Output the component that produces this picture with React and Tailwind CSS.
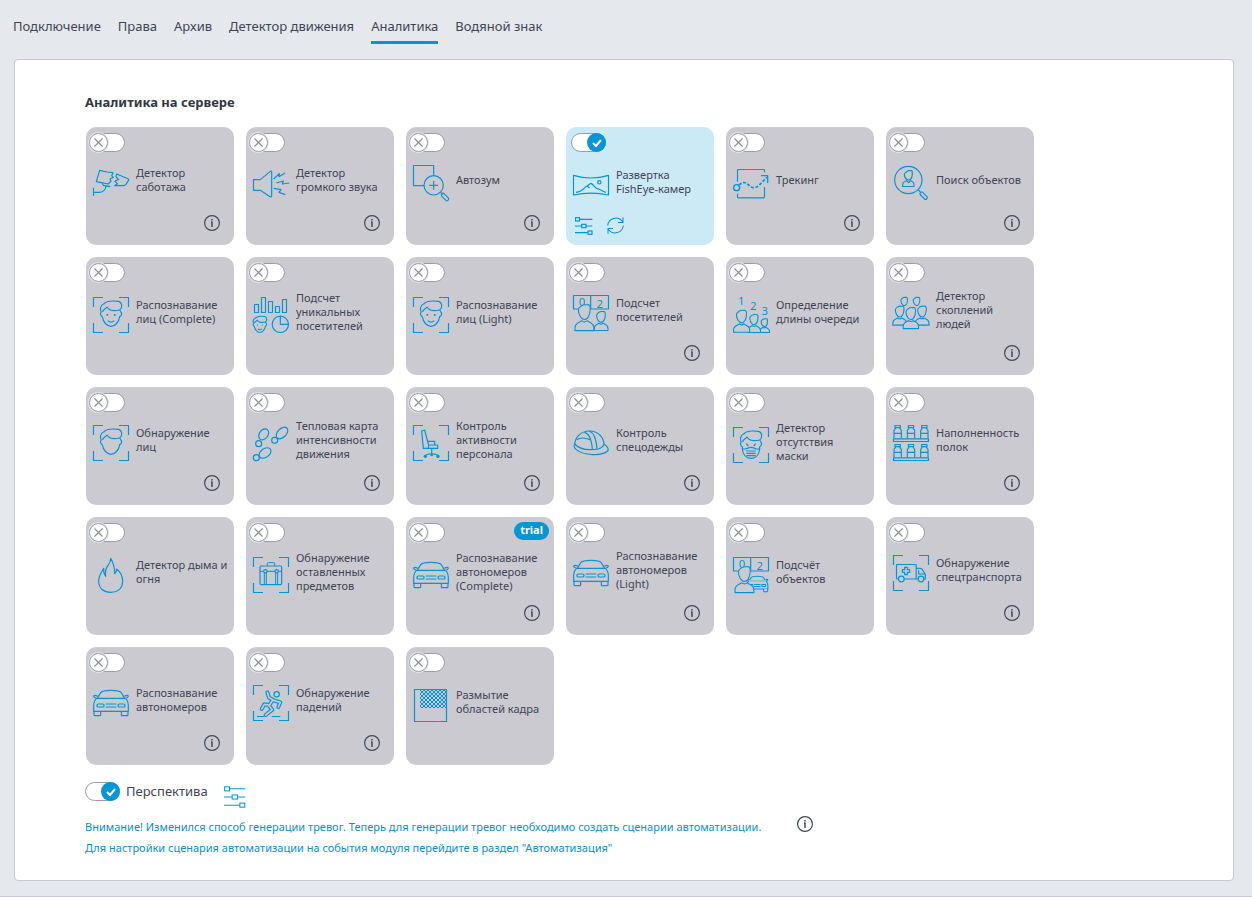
import React, { useState } from 'react';
import clsx from 'clsx';

const tabs = ['Подключение', 'Права', 'Архив', 'Детектор движения', 'Аналитика', 'Водяной знак'];

// All module icons share a 108x108 grid, shown at 36px
const Icon = ({ children }) => (
  <svg
    viewBox="0 0 108 108"
    className="h-9 w-9 shrink-0 overflow-visible"
    fill="none"
    stroke="#0095d6"
    strokeWidth="3.5"
    strokeLinejoin="round"
    aria-hidden="true"
  >
    {children}
  </svg>
);

const Brackets = () => (
  <path d="M30 1.5H1.5V30M78 1.5h28.5V30M1.5 78v28.5H30M106.5 78v28.5H78" />
);

const Hair = () => (
  <path d="M25 46C20 38 22 24 32 21C40 12 60 11 76 13C87 15 90 30 80 39C66 42 54 42 47 36L42 30C38 37 29 36 29 45M80 39C83 40 83 43 83 46" />
);

const FaceOutline = () => (
  <path d="M25 46C20 47 23 57 28 59C30 75 42 88 54 88C66 88 78 75 80 59C86 57 88 47 83 46" />
);

const Face = () => (
  <>
    <Hair />
    <FaceOutline />
    <path d="M43 51v5M65 51v5" strokeWidth="5" />
    <path d="M44 71Q54 80 64 71" />
  </>
);

const Head = ({ x, y, s }) => (
  <path
    d="M12 17C13 9 18 9 22 5C28 0 36 3 40 2C46 2 48 8 47 16C47 32 40 46 30 46C20 46 12 30 12 17Z"
    transform={`translate(${x} ${y}) scale(${s})`}
    strokeWidth={3.3 / s}
    fill="#cbcad1"
  />
);

const Person = ({ x, y, s }) => (
  <g>
    <path
      d="M2 79V70C2 56 14 55 22 50Q30 56 38 50C46 55 58 56 58 70V79Z"
      transform={`translate(${x} ${y}) scale(${s})`}
      strokeWidth={3.3 / s}
      fill="#cbcad1"
    />
    <Head x={x} y={y} s={s} />
  </g>
);

const Digit = ({ x, y, children }) => (
  <text x={x} y={y} fontSize="34" textAnchor="middle" fill="#0095d6" stroke="none" fontFamily="Noto Sans, sans-serif">
    {children}
  </text>
);

const Handle = ({ x, y }) => (
  <rect x="-13" y="-5" width="26" height="10" rx="4" transform={`translate(${x} ${y}) rotate(45)`} />
);

const CarShape = () => (
  <>
    <path d="M13 40L23 23Q27 16 54 16Q81 16 85 23L95 40" />
    <path d="M14 34C8 30 2 30 2 34C3 38 8 39 11 40H97C100 39 105 38 106 34C106 30 100 30 94 34" />
    <path d="M11 40C4 46 2 54 2 62V79H106V62C106 54 104 46 97 40" />
    <rect x="12" y="57" width="21" height="9" rx="4" />
    <rect x="75" y="57" width="21" height="9" rx="4" />
    <path d="M38 57H70M38 66H70" />
    <path d="M3 79V89Q3 92 6 92H20Q23 92 23 89V79M85 79V89Q85 92 88 92H102Q105 92 105 89V79" />
  </>
);

const Bottle = ({ x, y }) => (
  <g transform={`translate(${x} ${y})`}>
    <path d="M4 1.5H20V8H4ZM6 8C6 13 1 12 1 18V40M18 8C18 13 23 12 23 18V40M1 25H23" />
  </g>
);

const Board = () => <path d="M1.5 42V1.5H106.5V42ZM53 2V42" />;

const icons = {
  sabotage: (
    <Icon>
      <path d="M20 16L42 21L60 23L56 32L61 37L51 42L54 48L46 57L10 50Z" />
      <path d="M71 27L105 41Q109 43 106 47L99 58Q95 62 88 62L65 62L73 56L66 49L77 43L69 36Z" />
      <path d="M27 54L31 61L52 65M39 63C37 76 30 82 18 82H2M1.5 68V93" />
    </Icon>
  ),
  sound: (
    <Icon>
      <path d="M1.5 44V76H22L51 95Q56 97 56 92V21Q56 16 51 20L22 44Z" />
      <path d="M62 42L79 26L78 35L96 24M70 54L91 48L88 57L109 54M62 70L84 74L78 82L97 89" />
    </Icon>
  ),
  autozoom: (
    <Icon>
      <path d="M33 62H1.5V1.5H62V31" />
      <circle cx="62" cy="61" r="29" />
      <path d="M62 48V74M49 61H75M83 82L89 88" />
      <Handle x={96} y={96} />
    </Icon>
  ),
  fisheye: (
    <Icon>
      <path d="M1.5 25Q54 41 106.5 25V84Q54 73 1.5 84Z" />
      <path d="M9 76C22 75 30 68 36 62L42 57L50 63M42 57L54 49C62 52 66 64 73 65C82 67 90 74 99 76" />
      <circle cx="79" cy="46" r="5" />
    </Icon>
  ),
  tracking: (
    <Icon>
      <path d="M13.5 50V16Q13.5 13.5 16 13.5H92Q94.5 13.5 94.5 16V22M13.5 86V96Q13.5 98.5 16 98.5H92Q94.5 98.5 94.5 96V66" />
      <circle cx="11" cy="68" r="9" strokeWidth="4" />
      <path d="M18 60C30 48 40 52 49 62C58 72 74 68 81 58L102 36" strokeWidth="5" strokeDasharray="9 5" />
      <path d="M84 32H104V54" strokeWidth="4" />
    </Icon>
  ),
  search: (
    <Icon>
      <circle cx="46" cy="45" r="41" />
      <path d="M34 28C36 20 42 21 46 17H57C60 30 56 45 47 45C40 45 34 37 34 28Z" />
      <path d="M29 64.5V58C29 50 36 50 41 47L47 53L53 47C58 50 63 50 63 58V64.5Z" />
      <path d="M75 74L82 81" />
      <Handle x={92} y={92} />
    </Icon>
  ),
  face: (
    <Icon>
      <Brackets />
      <Face />
    </Icon>
  ),
  unique: (
    <Icon>
      <rect x="4.5" y="22.5" width="12" height="24" />
      <rect x="25.5" y="1.5" width="12" height="45" />
      <rect x="46.5" y="13.5" width="12" height="33" />
      <rect x="67.5" y="28.5" width="12" height="18" />
      <rect x="88.5" y="7.5" width="12" height="39" />
      <g transform="translate(-14 50) scale(.64)" strokeWidth="5">
        <Face />
      </g>
      <circle cx="82" cy="82" r="24.5" />
      <path d="M82 58V82H106" />
    </Icon>
  ),
  visitors: (
    <Icon>
      <Board />
      <Digit x={27} y={34}>0</Digit>
      <Digit x={80} y={38}>2</Digit>
      <Person x={62} y={48} s={0.74} />
      <Person x={4} y={27} s={1.01} />
    </Icon>
  ),
  queue: (
    <Icon>
      <Digit x={25} y={25}>1</Digit>
      <Digit x={61} y={39}>2</Digit>
      <Digit x={95} y={53}>3</Digit>
      <Person x={78} y={64} s={0.54} />
      <Person x={42} y={51} s={0.7} />
      <Person x={0} y={38} s={0.86} />
    </Icon>
  ),
  crowd: (
    <Icon>
      <Head x={17} y={6} s={0.56} />
      <Head x={54} y={6} s={0.56} />
      <Person x={-2} y={32} s={0.74} />
      <Person x={65} y={32} s={0.74} />
      <Person x={29} y={36} s={0.82} />
    </Icon>
  ),
  faceDetect: (
    <Icon>
      <Brackets />
      <Hair />
      <FaceOutline />
    </Icon>
  ),
  heatmap: (
    <Icon>
      <ellipse cx="32" cy="28" rx="18" ry="13" transform="rotate(-55 32 28)" />
      <circle cx="17" cy="56" r="9" />
      <ellipse cx="87" cy="24" rx="21" ry="13" transform="rotate(-46 87 24)" />
      <circle cx="65" cy="46" r="9" />
      <ellipse cx="36" cy="84" rx="20" ry="13" transform="rotate(-36 36 84)" />
      <circle cx="10" cy="98" r="9" />
    </Icon>
  ),
  chair: (
    <Icon>
      <Brackets />
      <path d="M26 18L35 15L47 62V70H31Z" />
      <path d="M43 49H65V60M45 60H74V70H40M56 71V86M37 91C44 85 66 85 75 91" />
      <g fill="#0095d6" stroke="none">
        <circle cx="37" cy="94" r="5" />
        <circle cx="56" cy="90" r="4" />
        <circle cx="75" cy="94" r="5" />
      </g>
    </Icon>
  ),
  helmet: (
    <Icon>
      <path d="M5 57C7 32 28 18 50 18C74 18 92 36 93 58" />
      <path d="M5 57C20 74 50 76 76 72C86 70 90 64 93 58C104 64 108 72 104 78C86 94 32 92 10 74C3 68 2 62 5 57Z" />
      <path d="M34 22C50 26 56 44 58 73M49 18C64 24 70 44 72 72M11 44C22 36 40 38 54 46" />
    </Icon>
  ),
  mask: (
    <Icon>
      <Brackets />
      <Hair />
      <path d="M25 46C20 47 23 57 28 59V66H38Q54 56 70 66H80V59C86 57 88 47 83 46M28 66C30 84 40 94 54 94C68 94 78 84 80 66" />
      <path d="M40 50L46 57M68 50L62 57M40 72H68M40 79H68M40 86H68" />
    </Icon>
  ),
  shelves: (
    <Icon>
      {[0, 57].map((y) => (
        <g key={y}>
          <Bottle x={2} y={y} />
          <Bottle x={42} y={y} />
          <Bottle x={82} y={y} />
          <rect x="1.5" y={y + 41.5} width="105" height="8" />
        </g>
      ))}
    </Icon>
  ),
  fire: (
    <Icon>
      <path d="M53 4C60 15 65 28 65 50C69 47 71 42 71 36C84 46 89 62 89 74C88 96 72 106 53 106C32 106 18 94 17 74C16 56 26 46 32 34C31 44 34 52 38 58C36 44 39 32 46 24C51 18 53 12 53 4Z" />
    </Icon>
  ),
  suitcase: (
    <Icon>
      <Brackets />
      <rect x="21" y="27" width="65" height="56" rx="4" />
      <path d="M43 27V20Q43 17 46 17H62Q65 17 65 20V27M42 43H66M21 43H31M77 43H86M34 48V82M40 48V82M68 48V82M74 48V82" strokeWidth="3" />
      <circle cx="37" cy="43" r="5" />
      <circle cx="71" cy="43" r="5" />
    </Icon>
  ),
  car: (
    <Icon>
      <CarShape />
    </Icon>
  ),
  objects: (
    <Icon>
      <Board />
      <Digit x={27} y={34}>0</Digit>
      <Digit x={80} y={38}>2</Digit>
      <g transform="translate(40 48) scale(.61)" strokeWidth="5" fill="#cbcad1">
        <CarShape />
      </g>
      <Person x={4} y={27} s={1.01} />
    </Icon>
  ),
  ambulance: (
    <Icon>
      <Brackets />
      <path d="M16 72H13Q10.5 72 10.5 69V31Q10.5 28.5 13 28.5H67Q69.5 28.5 69.5 31V72H34M70 40H82Q86 40 88 44L97 58V72H93M75 72H70M77 46V57H95" />
      <path d="M35 37H43V44H50V52H43V59H35V52H28V44H35Z" />
      <circle cx="25" cy="72" r="8.5" />
      <circle cx="84" cy="72" r="8.5" />
    </Icon>
  ),
  fall: (
    <Icon>
      <Brackets />
      <path d="M12 94.5H34M56 94.5H82" />
      <circle cx="71" cy="28" r="8" />
      <g strokeLinecap="round" strokeWidth="12">
        <path d="M43 22L48 38L60 44L48 62L58 74L38 90M48 60L34 58L26 72M62 46L82 52L76 66" />
        <path d="M43 22L48 38L60 44L48 62L58 74L38 90M48 60L34 58L26 72M62 46L82 52L76 66" stroke="#cbcad1" strokeWidth="5" />
      </g>
    </Icon>
  ),
  blur: (
    <Icon>
      <defs>
        <pattern id="checker" width="12" height="12" patternUnits="userSpaceOnUse">
          <path d="M0 0h6v6h-6zM6 6h6v6h-6z" fill="#0095d6" stroke="none" />
        </pattern>
      </defs>
      <rect x="21" y="6" width="81" height="57" fill="url(#checker)" stroke="none" />
      <rect x="4.5" y="7.5" width="96" height="96" />
    </Icon>
  ),
};

const modules = [
  { title: 'Детектор саботажа', icon: 'sabotage', info: true },
  { title: 'Детектор громкого звука', icon: 'sound', info: true },
  { title: 'Автозум', icon: 'autozoom', info: true },
  { title: 'Развертка FishEye-камер', icon: 'fisheye', enabled: true },
  { title: 'Трекинг', icon: 'tracking', info: true },
  { title: 'Поиск объектов', icon: 'search', info: true },
  { title: 'Распознавание лиц (Complete)', icon: 'face' },
  { title: 'Подсчет уникальных посетителей', icon: 'unique' },
  { title: 'Распознавание лиц (Light)', icon: 'face' },
  { title: 'Подсчет посетителей', icon: 'visitors', info: true },
  { title: 'Определение длины очереди', icon: 'queue' },
  { title: 'Детектор скоплений людей', icon: 'crowd', info: true },
  { title: 'Обнаружение лиц', icon: 'faceDetect', info: true },
  { title: 'Тепловая карта интенсивности движения', icon: 'heatmap', info: true },
  { title: 'Контроль активности персонала', icon: 'chair', info: true },
  { title: 'Контроль спецодежды', icon: 'helmet', info: true },
  { title: 'Детектор отсутствия маски', icon: 'mask' },
  { title: 'Наполненность полок', icon: 'shelves', info: true },
  { title: 'Детектор дыма и огня', icon: 'fire' },
  { title: 'Обнаружение оставленных предметов', icon: 'suitcase' },
  { title: 'Распознавание автономеров (Complete)', icon: 'car', info: true, trial: true },
  { title: 'Распознавание автономеров (Light)', icon: 'car', info: true },
  { title: 'Подсчёт объектов', icon: 'objects' },
  { title: 'Обнаружение спецтранспорта', icon: 'ambulance', info: true },
  { title: 'Распознавание автономеров', icon: 'car', info: true },
  { title: 'Обнаружение падений', icon: 'fall', info: true },
  { title: 'Размытие областей кадра', icon: 'blur' },
];

const Toggle = ({ label, checked, onChange, children }) => (
  <label className="flex cursor-pointer items-center gap-1.5">
    <input
      type="checkbox"
      className="sr-only"
      aria-label={label}
      checked={checked}
      onChange={(e) => onChange(e.target.checked)}
    />
    <span
      className={clsx(
        'flex h-[19px] items-center rounded-full border border-[#9b9ca8] bg-white',
        checked ? 'w-[35px] justify-end' : 'w-9 justify-start'
      )}
    >
      {checked ? (
        <span className="-mr-px flex h-[19px] w-[19px] items-center justify-center rounded-full bg-[#0095d6]">
          <svg viewBox="0 0 10 10" className="h-2.5 w-2.5" fill="none" stroke="#fff" strokeWidth="2" aria-hidden="true">
            <path d="M1 5l3 3 5-6" />
          </svg>
        </span>
      ) : (
        <span className="-ml-px flex h-[19px] w-[19px] items-center justify-center rounded-full border border-[#9b9ca8] bg-white ring-1 ring-[#e2e5ea]">
          <svg viewBox="0 0 9 9" className="h-[9px] w-[9px]" fill="none" stroke="#8f909d" strokeWidth="1.2" aria-hidden="true">
            <path d="M.5.5l8 8M8.500.5l-8 8" />
          </svg>
        </span>
      )}
    </span>
    {children}
  </label>
);

const InfoButton = () => (
  <button type="button" aria-label="Информация" className="h-4 w-4 shrink-0 cursor-pointer">
    <svg viewBox="0 0 16 16" className="h-4 w-4" fill="none" stroke="#434859" aria-hidden="true">
      <circle cx="8" cy="8" r="7.4" strokeWidth="1.2" />
      <path d="M8 6.5V12M8 4v1.500M7 6.900h1" strokeWidth="1.5" />
    </svg>
  </button>
);

const SlidersIcon = ({ className, strokeWidth }) => (
  <svg viewBox="0 0 54 54" className={className} fill="none" stroke="#0095d6" strokeWidth={strokeWidth} aria-hidden="true">
    <rect x="1.5" y="2" width="12" height="10" />
    <rect x="20" y="22" width="13" height="10" />
    <rect x="39" y="42" width="12" height="10" />
    <path d="M14 7H52M0 27H20M33 27H52M0 47H39" />
  </svg>
);

const ModuleCard = ({ module, enabled, onToggle }) => (
  <article
    className={clsx(
      'flex h-[118px] w-[148px] flex-col rounded-[10px]',
      enabled ? 'bg-[#cceaf6]' : 'bg-[#cbcad1]'
    )}
  >
    <div
      className={clsx(
        'flex items-start justify-between pr-[5px]',
        enabled ? 'pl-[5px]' : 'pl-[3px]',
        module.trial ? 'h-7' : 'h-[26px]'
      )}
    >
      <div className="pt-1.5">
        <Toggle label={module.title} checked={enabled} onChange={onToggle} />
      </div>
      {module.trial && (
        <span className="mt-[5px] h-[18px] rounded-full bg-[#0095d6] px-1.5 text-[11px] font-bold leading-4 text-white">
          trial
        </span>
      )}
    </div>

    <div className="flex flex-1 items-center gap-[7px] pl-[7px] pr-1.5">
      {icons[module.icon]}
      <h3 className="min-w-0 flex-1 pb-1.5 text-[11px] leading-[14px]">{module.title}</h3>
    </div>

    {enabled ? (
      <div className="flex h-7 items-start gap-3.5 pl-[9px]">
        <button type="button" aria-label="Настройки" className="cursor-pointer">
          <SlidersIcon className="h-[18px] w-[18px]" strokeWidth="3.5" />
        </button>
        <button type="button" aria-label="Обновить" className="cursor-pointer">
          <svg viewBox="0 0 50 50" className="h-[17px] w-[17px]" fill="none" stroke="#0095d6" strokeWidth="3" aria-hidden="true">
            <path d="M2 25C4 4 32 -6 46 14M47 1V16H32M48 25C46 46 18 56 4 36M3 49V34H18" />
          </svg>
        </button>
      </div>
    ) : (
      <div
        className={clsx(
          'flex items-start justify-end pr-3.5',
          module.trial && 'h-[30px]',
          !module.trial && (module.info ? 'h-8 pt-0.5' : 'h-7')
        )}
      >
        {module.info && <InfoButton />}
      </div>
    )}
  </article>
);

export default function App() {
  const [activeTab, setActiveTab] = useState('Аналитика');
  const [enabled, setEnabled] = useState(() => modules.map((m) => Boolean(m.enabled)));
  const [perspective, setPerspective] = useState(true);

  const toggleModule = (index, value) => {
    setEnabled((prev) => prev.map((v, i) => (i === index ? value : v)));
  };

  return (
    <div className="flex min-h-screen flex-col bg-[#e5e8ed] font-['Noto_Sans',sans-serif] text-[#3f4454]">
      <nav className="flex gap-[17px] pl-[13px] pt-4 text-[13px] leading-5">
        {tabs.map((tab) => (
          <a
            key={tab}
            href="#"
            onClick={(e) => {
              e.preventDefault();
              setActiveTab(tab);
            }}
            className={clsx(
              'border-b-[3px] pb-[5px]',
              activeTab === tab ? 'border-[#0095d6]' : 'border-transparent'
            )}
          >
            {tab}
          </a>
        ))}
      </nav>

      <main className="ml-3.5 mr-[18px] mt-[15px] rounded border border-[#c9c9d1] bg-white px-[70px] pb-[22px] pt-8">
        <h2 className="text-[13px] font-bold leading-5 text-[#333740]">Аналитика на сервере</h2>

        <div className="mt-[15px] flex flex-wrap gap-3 pl-px">
          {modules.map((module, i) => (
            <ModuleCard
              key={module.title}
              module={module}
              enabled={enabled[i]}
              onToggle={(value) => toggleModule(i, value)}
            />
          ))}
        </div>

        <div className="mt-[17px] flex items-start gap-4">
          <Toggle checked={perspective} onChange={setPerspective}>
            <span className="text-[13px] leading-[19px]">Перспектива</span>
          </Toggle>
          <button type="button" aria-label="Настройки перспективы" className="mt-1 cursor-pointer">
            <SlidersIcon className="h-[22px] w-[22px]" strokeWidth="2.5" />
          </button>
        </div>

        <div className="mt-2 flex items-start gap-9 text-[11px] leading-[21px] text-[#0a8fce]">
          <p>
            Внимание! Изменился способ генерации тревог. Теперь для генерации тревог необходимо создать сценарии автоматизации.
            <br />
            Для настройки сценария автоматизации на события модуля перейдите в раздел "Автоматизация"
          </p>
          <InfoButton />
        </div>
      </main>

      <div className="mt-[15px] flex-1 border-t border-[#c9c9d1] bg-white" />
    </div>
  );
}
